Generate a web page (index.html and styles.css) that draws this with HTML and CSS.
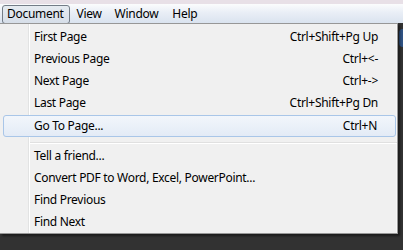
FILE: index.html
```html
<!DOCTYPE html>
<html lang="en">
<head>
<meta charset="utf-8">
<title>Document menu</title>
<link rel="stylesheet" href="styles.css">
</head>
<body>
	<div class="titlestrip"></div>
	<div class="menubar">
		<span class="menubar_item pressed">Document</span>
		<span class="menubar_item">View</span>
		<span class="menubar_item">Window</span>
		<span class="menubar_item">Help</span>
	</div>
	<div class="workspace">
		<div class="blob"></div>
		<ul class="dropdown">
			<li class="entry"><span>First Page</span><span>Ctrl+Shift+Pg Up</span></li>
			<li class="entry"><span>Previous Page</span><span>Ctrl+&lt;-</span></li>
			<li class="entry"><span>Next Page</span><span>Ctrl+-&gt;</span></li>
			<li class="entry"><span>Last Page</span><span>Ctrl+Shift+Pg Dn</span></li>
			<li class="entry hover"><span>Go To Page...</span><span>Ctrl+N</span></li>
			<li class="separator"></li>
			<li class="entry"><span>Tell a friend...</span></li>
			<li class="entry"><span>Convert PDF to Word, Excel, PowerPoint...</span></li>
			<li class="entry"><span>Find Previous</span></li>
			<li class="entry"><span>Find Next</span></li>
		</ul>
	</div>
</body>
</html>
```
FILE: styles.css
```css
body { margin: 0; background: #323232; font-family: "Noto Sans", "Open Sans", sans-serif; font-size: 12px; letter-spacing: -0.3px; color: #000; overflow: hidden; }

.titlestrip { height: 4px; background: #e8e0e7; }

.menubar { display: flex; gap: 2px; height: 19px; padding-left: 2px; background: linear-gradient(#fbfcfd, #e9eef6 45%, #dae3ef); }

.menubar_item { display: block; height: 17px; line-height: 16px; padding: 0 5px 0 4px; border: 1px solid transparent; border-radius: 3px; margin-top: 1px; }

.menubar_item.pressed { border-color: #737c87; background: linear-gradient(#e6ebf1, #d6dee8); }

.menubar_item:last-child { margin-left: 1px; }

.workspace { position: relative; display: flex; justify-content: flex-end; height: 227px; }

.blob { width: 8px; height: 18px; margin: 6px -4px 0 0; border-radius: 4px; background: #2f5283; }

.dropdown { position: absolute; left: 0; top: 0; width: 397px; margin: 0; padding: 2px 0 0; list-style: none; background: #f0f0f0 linear-gradient(to right, transparent 28px, #e2e3e3 28px, #e2e3e3 29px, #fff 29px, #fff 30px, transparent 30px); border: 1px solid #979797; border-left: none; box-shadow: inset -1px 0 0 #f7f7f7, 2px 2px 2px rgba(0, 0, 0, 0.45); }

.entry { display: flex; justify-content: space-between; height: 22px; line-height: 22px; padding: 0 19px 0 34px; }

.entry.hover { height: 20px; line-height: 20px; margin: 1px 1px 0 3px; padding: 0 18px 0 30px; border: 1px solid #a9c6e8; border-radius: 3px; background: linear-gradient(#f2f6fb, #e3ebf6); }

.separator { height: 8px; margin-left: 30px; background: linear-gradient(transparent 5px, #e0e0e0 5px, #e0e0e0 6px, #fff 6px, #fff 7px, transparent 7px); }
```
